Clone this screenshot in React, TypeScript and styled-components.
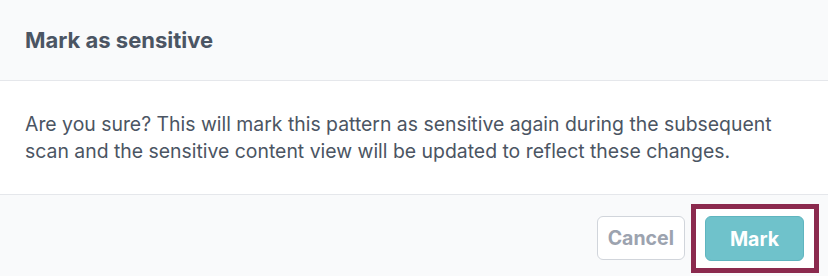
import * as React from 'react';
import styled, { createGlobalStyle } from 'styled-components';

const GlobalStyle = createGlobalStyle`
  html, body {
    margin: 0;
    padding: 0;
    background: #f9fafb;
  }
  body {
    font-family: Inter, "Noto Sans", sans-serif;
    -webkit-font-smoothing: antialiased;
  }
`;

const Modal = styled.div`
  width: 828px;
  height: 276px;
  display: flex;
  flex-direction: column;
  background: #ffffff;
  overflow: hidden;
`;

const Header = styled.header`
  height: 81px;
  display: flex;
  align-items: center;
  padding: 0 25px;
  background: #f9fafb;
  border-bottom: 1px solid #e5e7eb;
  box-sizing: border-box;
  flex-shrink: 0;
`;

const Title = styled.h1`
  margin: 0;
  font-size: 22px;
  font-weight: 700;
  color: #4b5563;
`;

const Body = styled.div`
  height: 114px;
  box-sizing: border-box;
  padding: 0 25px;
  display: flex;
  align-items: center;
  border-bottom: 1px solid #e5e7eb;
  flex-shrink: 0;
`;

const Message = styled.p`
  margin: 0;
  font-size: 19.4px;
  line-height: 27px;
  color: #4b5563;
`;

const Footer = styled.footer`
  flex: 1;
  display: flex;
  justify-content: flex-end;
  align-items: flex-start;
  gap: 20px;
  padding: 21px 24px 0;
  background: #f9fafb;
`;

const Button = styled.button<{ primary?: boolean }>`
  height: ${(p) => (p.primary ? '45px' : '44px')};
  padding: 0 ${(p) => (p.primary ? '24px' : '10px')};
  border-radius: 6px;
  font-family: Inter, "Noto Sans", sans-serif;
  font-size: 19.5px;
  font-weight: 700;
  cursor: pointer;
  border: 1px solid ${(p) => (p.primary ? '#5fb5bf' : '#d1d5db')};
  background: ${(p) => (p.primary ? '#6fc2cb' : '#ffffff')};
  color: ${(p) => (p.primary ? '#ffffff' : '#9ca3af')};
`;

const Highlight = styled.span`
  display: inline-flex;
  margin: -12px -15px 0 -14px;
  padding: 7px 10px 7px 9px;
  border: 5px solid #8b2a4e;
  background: #ffffff;
`;

export default function App() {
  return (
    <>
      <GlobalStyle />
      <Modal>
        <Header>
          <Title>Mark as sensitive</Title>
        </Header>
        <Body>
          <Message>
            Are you sure? This will mark this pattern as sensitive again during the subsequent
            scan and the sensitive content view will be updated to reflect these changes.
          </Message>
        </Body>
        <Footer>
          <Button>Cancel</Button>
          <Highlight>
            <Button primary>Mark</Button>
          </Highlight>
        </Footer>
      </Modal>
    </>
  );
}
